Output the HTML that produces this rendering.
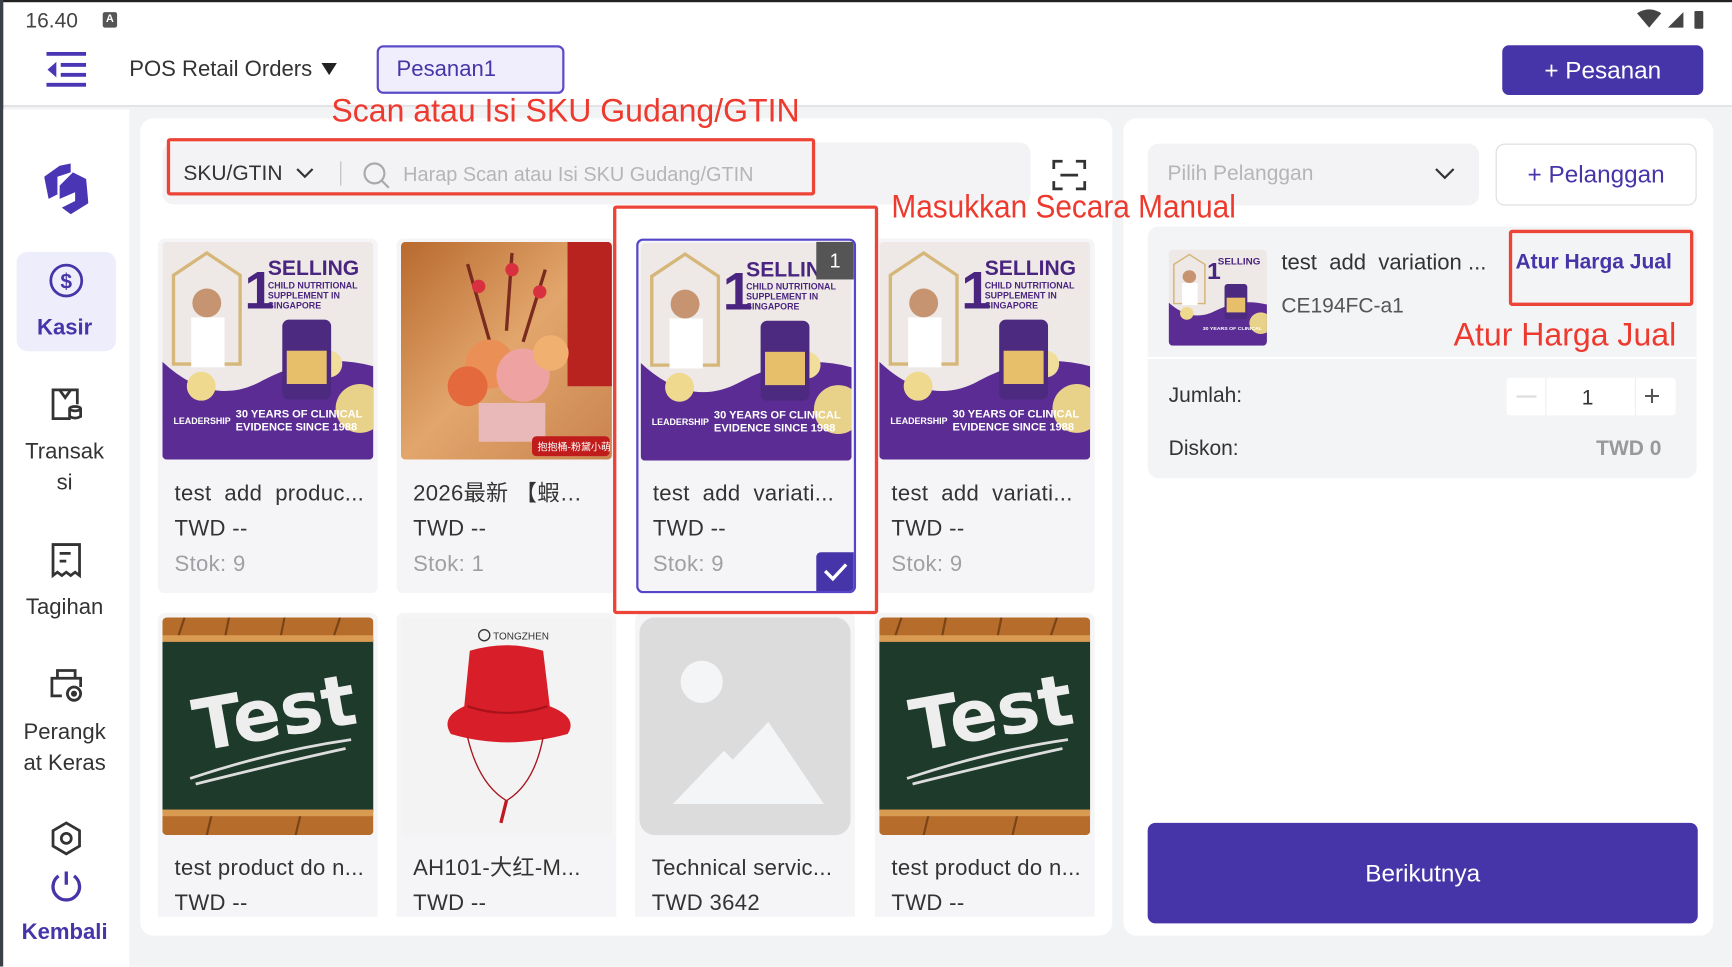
<!DOCTYPE html>
<html><head><meta charset="utf-8"><style>
*{margin:0;padding:0;box-sizing:border-box}
html,body{width:1732px;height:966px;overflow:hidden;background:#fff}
#s{position:absolute;left:0;top:0;width:1568px;height:875px;transform:scale(1.10459);transform-origin:0 0;font-family:"Liberation Sans","Noto Sans CJK SC",sans-serif;color:#333;background:#f2f3f5}
.a{position:absolute}
.t{position:absolute;white-space:nowrap;line-height:1}
.card{position:absolute;width:199px;background:#f5f5f7;border-radius:6px;overflow:hidden}
.img{position:absolute;left:4px;top:3px;width:191px;height:197px;border-radius:4px;overflow:hidden}
.img svg{width:100%;height:100%;display:block}
.ct{position:absolute;left:15px;font-size:20px;color:#333;white-space:nowrap;line-height:1;letter-spacing:.3px}
.red{color:#ee3a2e;font-size:29px}
.rbox{position:absolute;border:3px solid #ec4436;border-radius:3px}
.nav{position:absolute;left:0;width:117px;text-align:center;font-size:20px;color:#333;line-height:28px}
</style></head><body><div id="s">
<div class="a" style="left:0;top:0;width:1568px;height:97px;background:#fff;border-bottom:2px solid #e4e4e6"></div>
<div class="a" style="left:0;top:0;width:1568px;height:2px;background:#222"></div>
<div class="a" style="left:0;top:0;width:3px;height:875px;background:#3a4048"></div>
<div class="t" style="left:23px;top:10px;font-size:19px;color:#444">16.40</div>
<div class="a" style="left:93px;top:11px;width:13px;height:14px;background:#555;border-radius:2px;color:#fff;font-size:10px;text-align:center;line-height:14px;font-weight:bold">A</div>
<svg class="a" style="left:1480px;top:8px" width="70" height="20" viewBox="0 0 70 20"><path d="M2 4 Q13 -3 24 4 L13 17Z" fill="#444"/><path d="M30 17 L44 3 V17Z" fill="#444"/><rect x="54" y="2" width="8" height="16" rx="1" fill="#444"/></svg>
<svg class="a" style="left:42px;top:47px" width="36" height="32" viewBox="0 0 36 32"><rect x="0" y="0" width="36" height="3.5" fill="#4a36b5"/><rect x="0" y="28" width="36" height="3.5" fill="#4a36b5"/><rect x="13" y="10" width="23" height="3.5" fill="#4a36b5"/><rect x="13" y="19" width="23" height="3.5" fill="#4a36b5"/><path d="M9 9 L1 16 L9 23Z" fill="#4a36b5"/></svg>
<div class="t" style="left:117px;top:53px;font-size:20px;color:#333">POS Retail Orders</div>
<svg class="a" style="left:291px;top:57px" width="14" height="11"><path d="M0 0H14L7 11Z" fill="#222"/></svg>
<div class="a" style="left:341px;top:41px;width:170px;height:44px;background:#f0eefc;border:2px solid #5b4bc8;border-radius:6px"></div>
<div class="t" style="left:359px;top:53px;font-size:20px;color:#4535a8">Pesanan1</div>
<div class="a" style="left:1360px;top:41px;width:182px;height:45px;background:#4535a8;border-radius:6px;color:#fff;font-size:22px;text-align:center;line-height:45px">+ Pesanan</div>

<div class="a" style="left:3px;top:99px;width:114px;height:776px;background:#fff"></div>
<svg class="a" style="left:40px;top:148px" width="40" height="46" viewBox="0 0 40 46"><path d="M14 2 L24 0 L24 8 L12 12 L12 28 L4 32 L0 12Z" fill="#4a36b5"/><path d="M26 8 L38 14 L40 36 L24 46 L16 40 L28 34 L28 26 L14 32 L14 20Z" fill="#4a36b5"/></svg>
<div class="a" style="left:15px;top:228px;width:90px;height:90px;background:#eeedfb;border-radius:10px"></div>
<svg class="a" style="left:44px;top:238px" width="32" height="32" viewBox="0 0 32 32"><circle cx="16" cy="16" r="14" fill="none" stroke="#4535a8" stroke-width="2.5"/><text x="16" y="23" font-size="19" text-anchor="middle" fill="#4535a8" font-family="Liberation Sans" font-weight="bold">$</text></svg>
<div class="nav" style="top:283px;color:#4535a8;font-weight:bold">Kasir</div>
<svg class="a" style="left:44px;top:350px" width="32" height="32" viewBox="0 0 32 32" fill="none" stroke="#333" stroke-width="2.5"><path d="M20 29 H4 V3 H26 V16"/><path d="M10 3 L15 10 L20 3"/><ellipse cx="24" cy="20" rx="5" ry="2"/><path d="M19 20 V27 Q24 30 29 27 V20"/></svg>
<div class="nav" style="top:395px">Transak<br>si</div>
<svg class="a" style="left:44px;top:490px" width="32" height="34" viewBox="0 0 32 34" fill="none" stroke="#333" stroke-width="2.5"><path d="M4 31 V3 H28 V31 L24 28 L20 31 L16 28 L12 31 L8 28Z"/><path d="M10 11 H20 M10 18 H16"/></svg>
<div class="nav" style="top:536px">Tagihan</div>
<svg class="a" style="left:44px;top:604px" width="32" height="32" viewBox="0 0 32 32" fill="none" stroke="#333" stroke-width="2.5"><path d="M8 9 V3 H24 V9"/><path d="M12 26 H3 V10 H29 V18"/><circle cx="23" cy="24" r="6"/><circle cx="23" cy="24" r="1.5" fill="#333"/></svg>
<div class="nav" style="top:649px">Perangk<br>at Keras</div>
<svg class="a" style="left:45px;top:743px" width="30" height="32" viewBox="0 0 30 32" fill="none" stroke="#333" stroke-width="2.5"><path d="M15 2 L27 9 V23 L15 30 L3 23 V9Z"/><circle cx="15" cy="16" r="4.5"/></svg>
<svg class="a" style="left:44px;top:786px" width="32" height="32" viewBox="0 0 32 32" fill="none" stroke="#4535a8" stroke-width="3"><path d="M16 3 V15"/><path d="M9 7 A12 12 0 1 0 23 7"/></svg>
<div class="nav" style="top:830px;color:#4535a8;font-weight:bold">Kembali</div>

<div class="a" style="left:127px;top:107px;width:880px;height:740px;background:#fff;border-radius:12px"></div>
<div class="a" style="left:147px;top:129px;width:786px;height:56px;background:#f3f3f5;border-radius:10px"></div>
<div class="t" style="left:166px;top:148px;font-size:19px;color:#333">SKU/GTIN</div>
<svg class="a" style="left:268px;top:152px" width="16" height="10"><path d="M1 1 L8 8 L15 1" fill="none" stroke="#333" stroke-width="2"/></svg>
<div class="a" style="left:308px;top:146px;width:1px;height:22px;background:#bbb"></div>
<svg class="a" style="left:328px;top:146px" width="26" height="26" viewBox="0 0 26 26" fill="none" stroke="#aaa" stroke-width="2"><circle cx="11" cy="11" r="9"/><path d="M18 18 L24 24"/></svg>
<div class="t" style="left:365px;top:149px;font-size:18px;color:#b5b5b8">Harap Scan atau Isi SKU Gudang/GTIN</div>
<svg class="a" style="left:952px;top:143px" width="32" height="31" viewBox="0 0 32 31" fill="none" stroke="#333" stroke-width="2.5"><path d="M2 10 V3 H10 M22 3 H30 V10 M30 21 V28 H22 M10 28 H2 V21"/><path d="M8 15.5 H24"/></svg>

<div class="card" style="left:143px;top:216px;height:321px">
<div class="img"><svg viewBox="0 0 190 196" preserveAspectRatio="none"><rect width="190" height="196" fill="#eee9e6"/><path d="M10 110 V30 L40 10 L70 30 V110Z" fill="none" stroke="#d6b77a" stroke-width="3"/><rect x="26" y="68" width="30" height="45" fill="#fff"/><circle cx="40" cy="55" r="13" fill="#c69471"/><path d="M0 108 Q45 150 90 125 Q140 98 190 112 V196 H0Z" fill="#5b2d94"/><circle cx="35" cy="130" r="13" fill="#efd98e"/><circle cx="178" cy="150" r="22" fill="#e8d28a"/><circle cx="150" cy="110" r="12" fill="#f0de9a"/><rect x="108" y="70" width="44" height="72" rx="6" fill="#4b2a7f"/><rect x="112" y="98" width="36" height="30" fill="#e7bf6a"/><text x="74" y="60" font-size="48" font-weight="bold" fill="#4a2580" font-family="Liberation Sans">1</text><text x="95" y="30" font-size="19" font-weight="bold" fill="#4a2580" font-family="Liberation Sans">SELLING</text><text x="95" y="42" font-size="8" font-weight="bold" fill="#4a2580" font-family="Liberation Sans">CHILD NUTRITIONAL</text><text x="95" y="51" font-size="8" font-weight="bold" fill="#4a2580" font-family="Liberation Sans">SUPPLEMENT IN</text><text x="95" y="60" font-size="8" font-weight="bold" fill="#4a2580" font-family="Liberation Sans">SINGAPORE</text><text x="66" y="158" font-size="10" font-weight="bold" fill="#fff" font-family="Liberation Sans">30 YEARS OF CLINICAL</text><text x="66" y="170" font-size="10" font-weight="bold" fill="#fff" font-family="Liberation Sans">EVIDENCE SINCE 1988</text><text x="10" y="164" font-size="8" font-weight="bold" fill="#fff" font-family="Liberation Sans">LEADERSHIP</text></svg></div>
<div class="ct" style="top:221px">test&nbsp; add&nbsp; produc...</div><div class="ct" style="top:253px">TWD --</div><div class="ct" style="top:285px;color:#a0a0a4">Stok: 9</div></div>

<div class="card" style="left:359px;top:216px;height:321px">
<div class="img"><svg viewBox="0 0 190 196" preserveAspectRatio="none"><defs><linearGradient id="fg" x1="0" y1="0" x2="1" y2="1"><stop offset="0" stop-color="#b8692e"/><stop offset=".5" stop-color="#e2a66c"/><stop offset="1" stop-color="#c9834e"/></linearGradient></defs><rect width="190" height="196" fill="url(#fg)"/><rect x="150" y="0" width="40" height="130" fill="#b8221f"/><path d="M60 20 L80 90 M100 10 L95 80 M130 25 L110 90" stroke="#7a2a1e" stroke-width="3"/><circle cx="70" cy="40" r="6" fill="#d93040"/><circle cx="100" cy="25" r="6" fill="#d93040"/><circle cx="125" cy="45" r="6" fill="#d93040"/><circle cx="80" cy="110" r="22" fill="#ea8f56"/><circle cx="110" cy="120" r="24" fill="#eea2a2"/><circle cx="60" cy="130" r="18" fill="#e46a3e"/><circle cx="135" cy="100" r="16" fill="#f0b070"/><rect x="70" y="145" width="60" height="35" fill="#e9b8b8"/><rect x="118" y="175" width="70" height="18" rx="4" fill="#c01c1c"/><text x="123" y="188" font-size="9" fill="#fff" font-family="Noto Sans CJK SC">抱抱桶-粉黛小萌</text></svg></div>
<div class="ct" style="top:221px">2026最新 【蝦…</div><div class="ct" style="top:253px">TWD --</div><div class="ct" style="top:285px;color:#a0a0a4">Stok: 1</div></div>

<div class="card" style="left:576px;top:216px;height:321px;border:2px solid #5545c8;background:#f5f5f7">
<div class="img" style="left:2px;top:2px"><svg viewBox="0 0 190 196" preserveAspectRatio="none"><rect width="190" height="196" fill="#eee9e6"/><path d="M10 110 V30 L40 10 L70 30 V110Z" fill="none" stroke="#d6b77a" stroke-width="3"/><rect x="26" y="68" width="30" height="45" fill="#fff"/><circle cx="40" cy="55" r="13" fill="#c69471"/><path d="M0 108 Q45 150 90 125 Q140 98 190 112 V196 H0Z" fill="#5b2d94"/><circle cx="35" cy="130" r="13" fill="#efd98e"/><circle cx="178" cy="150" r="22" fill="#e8d28a"/><circle cx="150" cy="110" r="12" fill="#f0de9a"/><rect x="108" y="70" width="44" height="72" rx="6" fill="#4b2a7f"/><rect x="112" y="98" width="36" height="30" fill="#e7bf6a"/><text x="74" y="60" font-size="48" font-weight="bold" fill="#4a2580" font-family="Liberation Sans">1</text><text x="95" y="30" font-size="19" font-weight="bold" fill="#4a2580" font-family="Liberation Sans">SELLING</text><text x="95" y="42" font-size="8" font-weight="bold" fill="#4a2580" font-family="Liberation Sans">CHILD NUTRITIONAL</text><text x="95" y="51" font-size="8" font-weight="bold" fill="#4a2580" font-family="Liberation Sans">SUPPLEMENT IN</text><text x="95" y="60" font-size="8" font-weight="bold" fill="#4a2580" font-family="Liberation Sans">SINGAPORE</text><text x="66" y="158" font-size="10" font-weight="bold" fill="#fff" font-family="Liberation Sans">30 YEARS OF CLINICAL</text><text x="66" y="170" font-size="10" font-weight="bold" fill="#fff" font-family="Liberation Sans">EVIDENCE SINCE 1988</text><text x="10" y="164" font-size="8" font-weight="bold" fill="#fff" font-family="Liberation Sans">LEADERSHIP</text></svg></div>
<div class="a" style="right:0;top:1px;width:34px;height:34px;background:#555;color:#fff;font-size:18px;text-align:center;line-height:34px">1</div>
<div class="ct" style="top:219px;left:13px">test&nbsp; add&nbsp; variati...</div><div class="ct" style="top:251px;left:13px">TWD --</div><div class="ct" style="top:283px;left:13px;color:#a0a0a4">Stok: 9</div>
<div class="a" style="right:0;bottom:0;width:34px;height:35px;background:#4535a8;border-radius:4px 0 0 0"><svg width="34" height="35"><path d="M8 17 L15 24 L27 11" fill="none" stroke="#fff" stroke-width="3"/></svg></div></div>

<div class="card" style="left:792px;top:216px;height:321px">
<div class="img"><svg viewBox="0 0 190 196" preserveAspectRatio="none"><rect width="190" height="196" fill="#eee9e6"/><path d="M10 110 V30 L40 10 L70 30 V110Z" fill="none" stroke="#d6b77a" stroke-width="3"/><rect x="26" y="68" width="30" height="45" fill="#fff"/><circle cx="40" cy="55" r="13" fill="#c69471"/><path d="M0 108 Q45 150 90 125 Q140 98 190 112 V196 H0Z" fill="#5b2d94"/><circle cx="35" cy="130" r="13" fill="#efd98e"/><circle cx="178" cy="150" r="22" fill="#e8d28a"/><circle cx="150" cy="110" r="12" fill="#f0de9a"/><rect x="108" y="70" width="44" height="72" rx="6" fill="#4b2a7f"/><rect x="112" y="98" width="36" height="30" fill="#e7bf6a"/><text x="74" y="60" font-size="48" font-weight="bold" fill="#4a2580" font-family="Liberation Sans">1</text><text x="95" y="30" font-size="19" font-weight="bold" fill="#4a2580" font-family="Liberation Sans">SELLING</text><text x="95" y="42" font-size="8" font-weight="bold" fill="#4a2580" font-family="Liberation Sans">CHILD NUTRITIONAL</text><text x="95" y="51" font-size="8" font-weight="bold" fill="#4a2580" font-family="Liberation Sans">SUPPLEMENT IN</text><text x="95" y="60" font-size="8" font-weight="bold" fill="#4a2580" font-family="Liberation Sans">SINGAPORE</text><text x="66" y="158" font-size="10" font-weight="bold" fill="#fff" font-family="Liberation Sans">30 YEARS OF CLINICAL</text><text x="66" y="170" font-size="10" font-weight="bold" fill="#fff" font-family="Liberation Sans">EVIDENCE SINCE 1988</text><text x="10" y="164" font-size="8" font-weight="bold" fill="#fff" font-family="Liberation Sans">LEADERSHIP</text></svg></div>
<div class="ct" style="top:221px">test&nbsp; add&nbsp; variati...</div><div class="ct" style="top:253px">TWD --</div><div class="ct" style="top:285px;color:#a0a0a4">Stok: 9</div></div>

<div class="card" style="left:143px;top:555px;height:275px;border-radius:6px 6px 0 0">
<div class="img" style="top:4px"><svg viewBox="0 0 190 196" preserveAspectRatio="none"><rect width="190" height="196" fill="#b66d2c"/><path d="M20 0 L10 30 M60 0 L55 25 M110 0 L105 25 M160 0 L150 30 M40 196 L45 175 M120 196 L125 175" stroke="#7a4416" stroke-width="2"/><rect x="0" y="20" width="190" height="155" fill="#1e3a2a"/><rect x="0" y="16" width="190" height="6" fill="#d99a52"/><rect x="0" y="173" width="190" height="6" fill="#d99a52"/><text x="28" y="110" font-size="64" fill="#eee" font-family="DejaVu Sans" font-weight="bold" transform="rotate(-10 90 90)">Test</text><path d="M25 145 Q100 120 170 110 M30 150 Q110 130 165 118" stroke="#ddd" stroke-width="2.5" fill="none"/></svg></div>
<div class="ct" style="top:221px">test product do n...</div><div class="ct" style="top:253px">TWD --</div></div>

<div class="card" style="left:359px;top:555px;height:275px;border-radius:6px 6px 0 0">
<div class="img" style="top:4px;background:#f3f3f3"><svg viewBox="0 0 190 196" preserveAspectRatio="none"><rect width="190" height="196" fill="#f3f3f3"/><circle cx="75" cy="16" r="5" fill="none" stroke="#333" stroke-width="1.2"/><text x="83" y="20" font-size="9" fill="#333" font-family="Liberation Sans">TONGZHEN</text><path d="M62 30 Q95 20 128 30 L134 80 Q160 90 150 105 Q95 120 45 105 Q35 90 57 80Z" fill="#d81e28"/><path d="M60 80 Q95 92 132 80" stroke="#a8121a" stroke-width="2" fill="none"/><path d="M60 108 Q70 150 95 165 Q120 150 128 108" stroke="#a8121a" stroke-width="1.2" fill="none"/><path d="M95 165 L90 185" stroke="#c01820" stroke-width="3"/></svg></div>
<div class="ct" style="top:221px">AH101-大红-M...</div><div class="ct" style="top:253px">TWD --</div></div>

<div class="card" style="left:575px;top:555px;height:275px;border-radius:6px 6px 0 0">
<div class="img" style="top:4px;border-radius:14px;background:#dcdcdc"><svg viewBox="0 0 190 196" preserveAspectRatio="none"><rect width="190" height="196" fill="#dcdcdc"/><circle cx="56" cy="58" r="19" fill="#f4f5f7"/><path d="M30 168 L76 120 L84 128 L116 94 L166 168Z" fill="#f4f5f7"/></svg></div>
<div class="ct" style="top:221px">Technical servic...</div><div class="ct" style="top:253px">TWD 3642</div></div>

<div class="card" style="left:792px;top:555px;height:275px;border-radius:6px 6px 0 0">
<div class="img" style="top:4px"><svg viewBox="0 0 190 196" preserveAspectRatio="none"><rect width="190" height="196" fill="#b66d2c"/><path d="M20 0 L10 30 M60 0 L55 25 M110 0 L105 25 M160 0 L150 30 M40 196 L45 175 M120 196 L125 175" stroke="#7a4416" stroke-width="2"/><rect x="0" y="20" width="190" height="155" fill="#1e3a2a"/><rect x="0" y="16" width="190" height="6" fill="#d99a52"/><rect x="0" y="173" width="190" height="6" fill="#d99a52"/><text x="28" y="110" font-size="64" fill="#eee" font-family="DejaVu Sans" font-weight="bold" transform="rotate(-10 90 90)">Test</text><path d="M25 145 Q100 120 170 110 M30 150 Q110 130 165 118" stroke="#ddd" stroke-width="2.5" fill="none"/></svg></div>
<div class="ct" style="top:221px">test product do n...</div><div class="ct" style="top:253px">TWD --</div></div>

<div class="a" style="left:1017px;top:107px;width:534px;height:740px;background:#fff;border-radius:12px"></div>
<div class="a" style="left:1039px;top:130px;width:300px;height:56px;background:#f3f3f5;border-radius:10px"></div>
<div class="t" style="left:1057px;top:148px;font-size:19px;color:#b5b5b8">Pilih Pelanggan</div>
<svg class="a" style="left:1299px;top:152px" width="18" height="11"><path d="M1 1 L9 9 L17 1" fill="none" stroke="#333" stroke-width="2"/></svg>
<div class="a" style="left:1354px;top:130px;width:182px;height:56px;background:#fff;border:1.5px solid #ddd;border-radius:8px;text-align:center;line-height:54px;font-size:22px;color:#4535a8">+ Pelanggan</div>
<div class="a" style="left:1039px;top:205px;width:497px;height:228px;background:#f3f4f6;border-radius:10px"></div>
<div class="a" style="left:1039px;top:323px;width:497px;height:2px;background:#fff"></div>
<div class="a" style="left:1058px;top:226px;width:89px;height:87px;border-radius:4px;overflow:hidden"><svg width="89" height="87" viewBox="0 0 190 196" preserveAspectRatio="none"><rect width="190" height="196" fill="#eee9e6"/><path d="M10 110 V30 L40 10 L70 30 V110Z" fill="none" stroke="#d6b77a" stroke-width="3"/><rect x="26" y="68" width="30" height="45" fill="#fff"/><circle cx="40" cy="55" r="13" fill="#c69471"/><path d="M0 108 Q45 150 90 125 Q140 98 190 112 V196 H0Z" fill="#5b2d94"/><circle cx="35" cy="130" r="13" fill="#efd98e"/><circle cx="178" cy="150" r="22" fill="#e8d28a"/><rect x="108" y="70" width="44" height="72" rx="6" fill="#4b2a7f"/><rect x="112" y="98" width="36" height="30" fill="#e7bf6a"/><text x="74" y="60" font-size="48" font-weight="bold" fill="#4a2580" font-family="Liberation Sans">1</text><text x="95" y="30" font-size="19" font-weight="bold" fill="#4a2580" font-family="Liberation Sans">SELLING</text><text x="66" y="164" font-size="10" font-weight="bold" fill="#fff" font-family="Liberation Sans">30 YEARS OF CLINICAL</text></svg></div>
<div class="t" style="left:1160px;top:228px;font-size:20px;color:#333">test&nbsp; add&nbsp; variation ...</div>
<div class="t" style="left:1160px;top:268px;font-size:19px;color:#555">CE194FC-a1</div>
<div class="t" style="left:1372px;top:228px;font-size:19px;color:#4535a8;font-weight:bold">Atur Harga Jual</div>
<div class="t" style="left:1058px;top:349px;font-size:19px;color:#333">Jumlah:</div>
<div class="a" style="left:1364px;top:342px;width:153px;height:34px;background:#fff;border-radius:3px"></div>
<div class="a" style="left:1399px;top:342px;width:1px;height:34px;background:#eee"></div>
<div class="a" style="left:1480px;top:342px;width:1px;height:34px;background:#eee"></div>
<div class="a" style="left:1373px;top:358px;width:18px;height:2px;background:#ddd"></div>
<div class="t" style="left:1432px;top:351px;font-size:19px;color:#333">1</div>
<div class="t" style="left:1488px;top:345px;font-size:26px;color:#555">+</div>
<div class="t" style="left:1058px;top:397px;font-size:19px;color:#333">Diskon:</div>
<div class="t" style="left:1445px;top:397px;font-size:19px;color:#999;font-weight:bold">TWD 0</div>
<div class="a" style="left:1039px;top:745px;width:498px;height:91px;background:#4535a8;border-radius:7px;color:#fff;font-size:22px;text-align:center;line-height:91px">Berikutnya</div>

<!-- annotations on top -->
<div class="rbox" style="left:151px;top:125px;width:587px;height:52px"></div>
<div class="rbox" style="left:555px;top:186px;width:240px;height:370px"></div>
<div class="rbox" style="left:1366px;top:208px;width:167px;height:69px"></div>
<div class="t red" style="left:300px;top:87px">Scan atau Isi SKU Gudang/GTIN</div>
<div class="t red" style="left:807px;top:174px;transform:scaleX(0.93);transform-origin:0 0">Masukkan Secara Manual</div>
<div class="t red" style="left:1316px;top:290px">Atur Harga Jual</div>
</div></body></html>
